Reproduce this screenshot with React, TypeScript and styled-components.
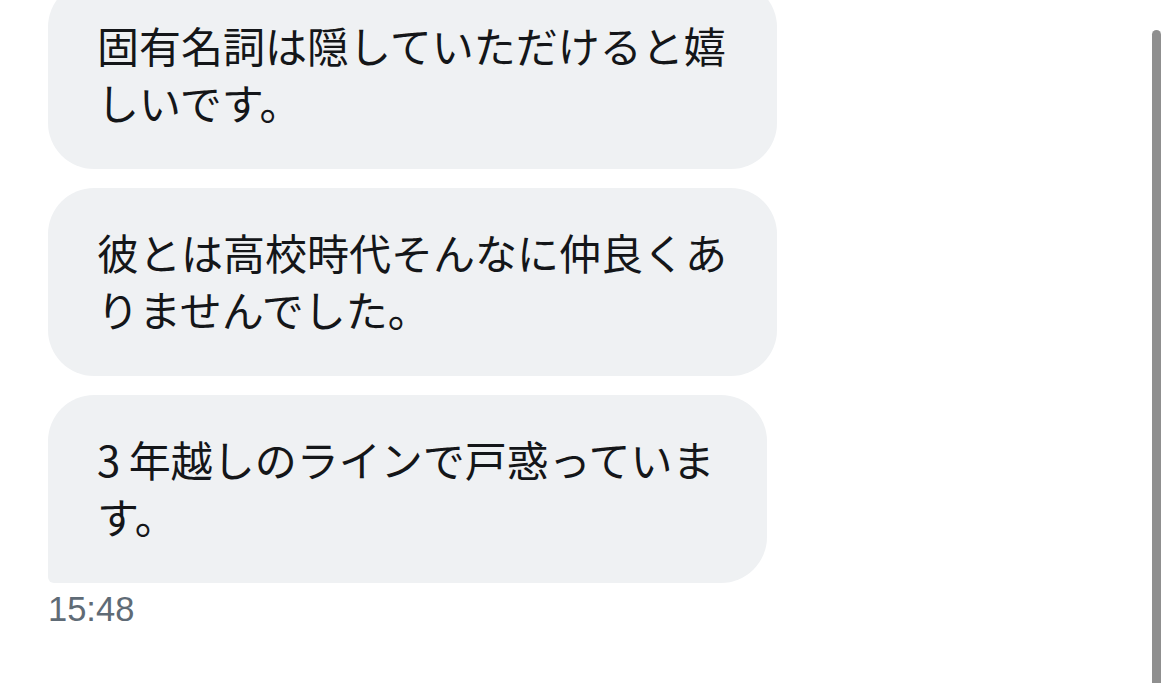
import React from "react";
import styled, { createGlobalStyle } from "styled-components";

const Global = createGlobalStyle`
  html, body {
    margin: 0;
    padding: 0;
    background: #ffffff;
    overflow: hidden;
  }
  body {
    font-family: "Noto Sans CJK JP", "Noto Sans", sans-serif;
  }
`;

const Viewport = styled.div`
  position: relative;
  width: 1169px;
  height: 683px;
  overflow: hidden;
  background: #ffffff;
`;

const Thread = styled.div`
  display: flex;
  flex-direction: column;
  align-items: flex-start;
  gap: 19px;
  padding-left: 48px;
  margin-top: -19px;
`;

const Group = styled.div`
  display: flex;
  flex-direction: column;
  align-items: flex-start;
  gap: 19px;
`;

const Bubble = styled.div<{ $last?: boolean; $max?: number }>`
  box-sizing: border-box;
  width: fit-content;
  max-width: ${(p) => p.$max ?? 729}px;
  padding: 35px 50px 39px 49px;
  background: #eff1f3;
  color: #141619;
  font-family: "Noto Sans CJK JP", "Noto Sans", sans-serif;
  font-size: 42px;
  line-height: 57px;
  border-radius: ${(p) => (p.$last ? "46px 46px 46px 6px" : "46px")};
  line-break: strict;
  word-break: normal;
`;

const Stamp = styled.div`
  margin-top: -12px;
  font-family: "Liberation Sans", Arial, sans-serif;
  font-size: 34.5px;
  line-height: 39px;
  color: #5f6b76;
`;

const ScrollThumb = styled.div`
  position: absolute;
  right: 8px;
  top: 30px;
  bottom: 0;
  width: 9px;
  border-radius: 5px 5px 0 0;
  background: #8f8f8f;
`;

export default function App() {
  return (
    <Viewport>
      <Global />
      <Thread>
        <Group>
          <Bubble>固有名詞は隠していただけると嬉しいです。</Bubble>
          <Bubble>彼とは高校時代そんなに仲良くありませんでした。</Bubble>
          <Bubble $last $max={719}>
            {"3\u2009年越しのラインで戸惑っています。"}
          </Bubble>
        </Group>
        <Stamp>15:48</Stamp>
      </Thread>
      <ScrollThumb />
    </Viewport>
  );
}
